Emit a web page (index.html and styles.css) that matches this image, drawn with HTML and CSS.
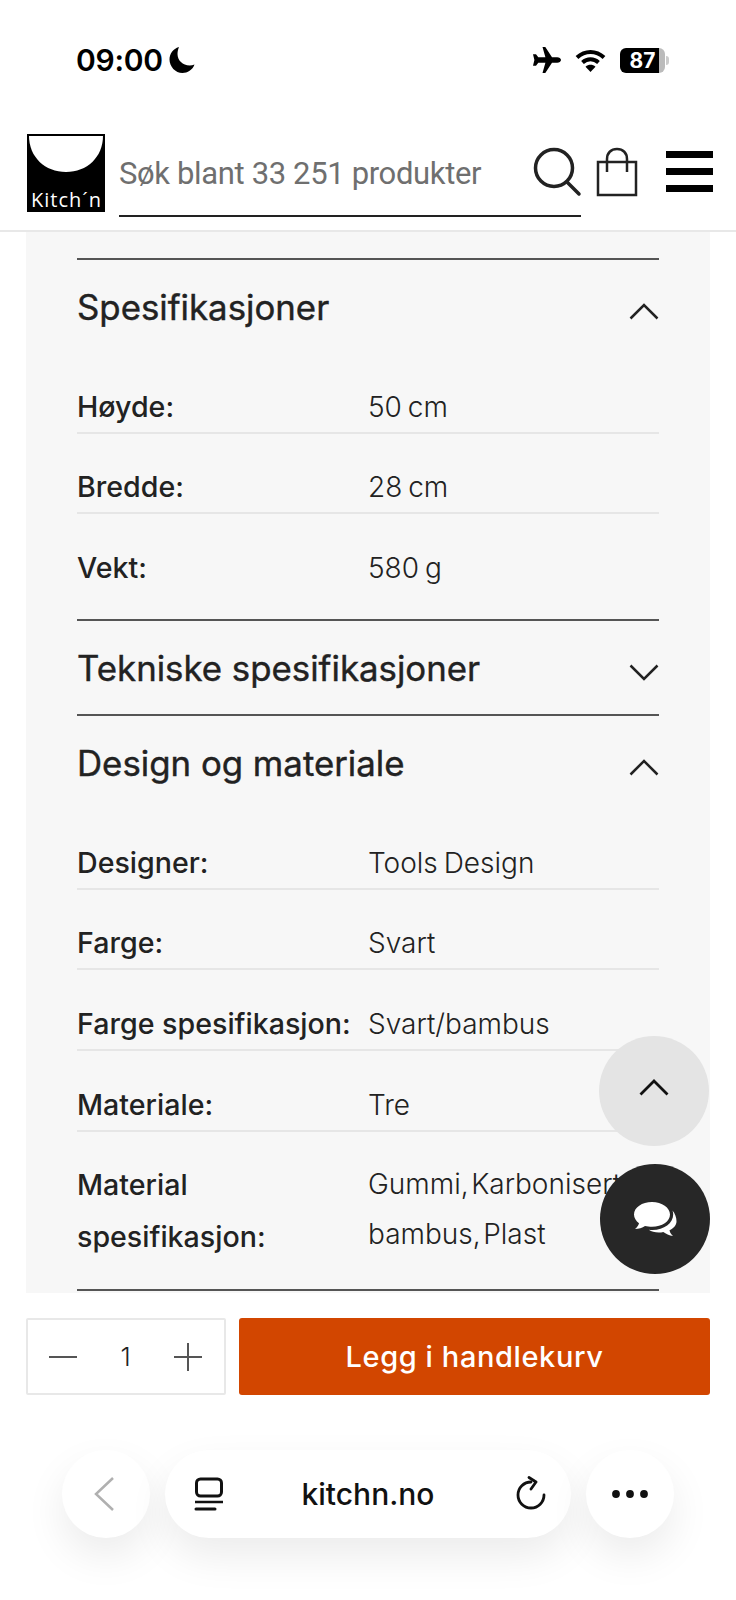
FILE: index.html
```html
<!DOCTYPE html>
<html lang="nb">
<head>
    <meta charset="UTF-8">
    <meta name="viewport" content="width=device-width, initial-scale=1.0">
    <title>Kitch'n</title>
    <link rel="stylesheet" href="styles.css">
</head>
<body>
    <div class="status-bar">
        <div class="status-left">
            <span class="status-time">09:00</span>
            <svg class="status-moon" width="28" height="28" viewBox="0 0 28 28"><path d="M11 1C5 2.800 1.500 8 1.500 13.500 1.500 20.500 7.300 27 14.500 27c5 0 10-3 12-8.500-1.500.7-3 1-4.800 1C14.700 19.500 9.500 14.300 9.500 8c0-2.500.5-4.800 1.500-7z" fill="#000"/></svg>
        </div>
        <div class="status-right">
            <svg width="30" height="26" viewBox="0 0 30 26"><path d="M11.500 0h2.800l6.700 10.300h5.200c2 0 3.800 1.200 3.800 2.700s-1.800 2.700-3.800 2.700H21L14.300 26h-2.800l2.900-10.300H7.300l-2.300 3H2l1.400-5.700L2 7.300h3l2.300 3h7.100z" fill="#000"/></svg>
            <svg width="31" height="23" viewBox="0 0 31 23"><path d="M2 8.500C10 1 21 1 29 8.500" fill="none" stroke="#000" stroke-width="4"/><path d="M7.500 13.500c4.700-4.300 11.300-4.300 16 0" fill="none" stroke="#000" stroke-width="4"/><path d="M15.500 23l-5-5.300c3-2.500 7-2.500 10 0z" fill="#000"/></svg>
            <div class="battery">
                <div class="battery-body">87</div>
                <div class="battery-cap"></div>
            </div>
        </div>
    </div>

    <header class="site-header">
        <svg class="logo" width="78" height="78" viewBox="0 0 78 78">
            <rect width="78" height="78" fill="#000"/>
            <path d="M2 2h74c0 21-16 36-37 36S2 23 2 2z" fill="#fff"/>
            <text x="4" y="73" fill="#fff" font-family="Open Sans, sans-serif" font-size="20" textLength="70">Kitch´n</text>
        </svg>
        <div class="search">
            <span class="search-text">Søk blant 33 251 produkter</span>
            <svg width="50" height="50" viewBox="0 0 50 50"><circle cx="22" cy="21" r="18.500" fill="none" stroke="#222" stroke-width="3.500"/><path d="M35 35l12 12" stroke="#222" stroke-width="3.500" stroke-linecap="round"/></svg>
        </div>
        <svg class="bag" width="42" height="50" viewBox="0 0 42 50"><rect x="2" y="15" width="38" height="33" fill="none" stroke="#222" stroke-width="2.500"/><path d="M11 25V12C11 6 15 2 21 2s10 4 10 10v13" fill="none" stroke="#222" stroke-width="2.500"/></svg>
        <div class="menu">
            <span></span>
            <span></span>
            <span></span>
        </div>
    </header>

    <main class="panel">
        <section class="spec">
            <div class="spec-head">
                <h2>Spesifikasjoner</h2>
                <svg class="chevron" width="30" height="17" viewBox="0 0 30 17"><path d="M1.500 15.500L15 2l13.500 13.500" fill="none" stroke="#222" stroke-width="2.500"/></svg>
            </div>
            <div class="row"><span class="label">Høyde:</span><span class="value">50 cm</span></div>
            <div class="row"><span class="label">Bredde:</span><span class="value">28 cm</span></div>
            <div class="row row-last"><span class="label">Vekt:</span><span class="value">580 g</span></div>
        </section>
        <section class="spec">
            <div class="spec-head">
                <h2>Tekniske spesifikasjoner</h2>
                <svg class="chevron" width="30" height="17" viewBox="0 0 30 17"><path d="M1.500 1.500L15 15 28.500 1.500" fill="none" stroke="#222" stroke-width="2.500"/></svg>
            </div>
        </section>
        <section class="spec">
            <div class="spec-head">
                <h2>Design og materiale</h2>
                <svg class="chevron" width="30" height="17" viewBox="0 0 30 17"><path d="M1.500 15.500L15 2l13.500 13.500" fill="none" stroke="#222" stroke-width="2.500"/></svg>
            </div>
            <div class="row"><span class="label">Designer:</span><span class="value">Tools Design</span></div>
            <div class="row"><span class="label">Farge:</span><span class="value">Svart</span></div>
            <div class="row"><span class="label">Farge spesifikasjon:</span><span class="value">Svart/bambus</span></div>
            <div class="row"><span class="label">Materiale:</span><span class="value">Tre</span></div>
            <div class="row row-last row-tall"><span class="label">Material spesifikasjon:</span><span class="value">Gummi,&#8202;Karbonisert bambus,&#8202;Plast</span></div>
        </section>
        <section class="spec"></section>
    </main>

    <div class="buy-bar">
        <div class="qty">
            <svg width="30" height="30" viewBox="0 0 30 30"><path d="M1 15h28" stroke="#555" stroke-width="2"/></svg>
            <span class="qty-num">1</span>
            <svg width="30" height="30" viewBox="0 0 30 30"><path d="M1 15h28M15 1v28" stroke="#555" stroke-width="2"/></svg>
        </div>
        <button class="buy-btn" type="button">Legg i handlekurv</button>
    </div>

    <nav class="browser-bar">
        <div class="pill pill-round">
            <svg class="back-icon" width="22" height="36" viewBox="0 0 22 36"><path d="M20 2L3 18l17 16" fill="none" stroke="#b0b0b0" stroke-width="2.500"/></svg>
        </div>
        <div class="pill pill-url">
            <svg width="30" height="34" viewBox="0 0 30 34"><rect x="2.500" y="2" width="25" height="17" rx="4" fill="none" stroke="#111" stroke-width="3"/><path d="M1 25h28" stroke="#111" stroke-width="2.500"/><path d="M2 32h19" stroke="#111" stroke-width="3" stroke-linecap="round"/></svg>
            <span class="url-text">kitchn.no</span>
            <svg width="30" height="36" viewBox="0 0 30 36"><path d="M15 6A13 13 0 1 0 28 19" fill="none" stroke="#111" stroke-width="2.800" stroke-linecap="round"/><path d="M13 1.500L20 6l-5 7" fill="none" stroke="#111" stroke-width="2.800" stroke-linecap="round" stroke-linejoin="round"/></svg>
        </div>
        <div class="pill pill-round">
            <svg width="38" height="10" viewBox="0 0 38 10"><circle cx="5" cy="5" r="3.900" fill="#111"/><circle cx="19" cy="5" r="3.900" fill="#111"/><circle cx="33" cy="5" r="3.900" fill="#111"/></svg>
        </div>
    </nav>

    <!-- flytende knapper over innholdet -->
    <div class="float float-up">
        <svg width="30" height="17" viewBox="0 0 30 17"><path d="M1.500 15.500L15 2l13.500 13.500" fill="none" stroke="#111" stroke-width="2.800"/></svg>
    </div>
    <div class="float float-chat">
        <svg width="44" height="36" viewBox="0 0 44 36"><path d="M19 1C9 1 1 6.500 1 13.500c0 3.500 2 6.500 5 8.800C5.500 24.500 3.500 27 2 28c3.500 0 7.500-1 10-3 2 .5 4.500.8 7 .8 10 0 18-5.500 18-12.300S29 1 19 1z" fill="#fff"/><path d="M39.500 9.500c.5 1.300.7 2.600.7 4C40.200 22 31 29 19.500 29c-1.300 0-2.500-.1-3.700-.3 2.500 1.800 6 2.800 10 2.800 1.700 0 3-.1 4.500-.5 2.500 1.800 6 3.500 9.700 4-1.200-1-3-3-3.500-5.700 4.300-2 7-5.200 7-9 0-4.200-1.600-7.800-4-10.800z" fill="#fff"/></svg>
    </div>
</body>
</html>
```

FILE: styles.css
```css
* {
    box-sizing: border-box;
}
html, body {
    margin: 0;
    padding: 0;
}
body {
    position: relative;
    width: 736px;
    height: 1600px;
    overflow: hidden;
    background-color: #fff;
    color: #222;
    font-family: 'Inter', sans-serif;
}

/* status bar */
.status-bar {
    display: flex;
    justify-content: space-between;
    align-items: center;
    height: 120px;
    padding: 0 67px 0 76px;
}
.status-left {
    display: flex;
    align-items: center;
    gap: 5px;
}
.status-time {
    font-size: 30px;
    font-weight: 600;
    color: #000;
    letter-spacing: -0.3px;
}
.status-right {
    display: flex;
    align-items: center;
    gap: 14px;
}
.battery {
    display: flex;
    align-items: center;
    gap: 1px;
}
.battery-body {
    width: 45px;
    height: 25px;
    border-radius: 6px;
    background: linear-gradient(to right, #000 87%, #bbb 87%);
    color: #fff;
    font-size: 21px;
    font-weight: 700;
    line-height: 25px;
    text-align: center;
}
.battery-cap {
    width: 3px;
    height: 9px;
    border-radius: 0 3px 3px 0;
    background-color: #ccc;
}

/* header */
.site-header {
    display: flex;
    align-items: flex-start;
    height: 112px;
    padding: 14px 23px 0 27px;
    border-bottom: 2px solid #e8e8e8;
}
.search {
    display: flex;
    justify-content: space-between;
    align-items: flex-start;
    width: 462px;
    height: 83px;
    margin-left: 14px;
    padding-top: 13px;
    border-bottom: 2px solid #222;
}
.search svg {
    margin-right: -1px;
}
.search-text {
    padding-top: 9px;
    font-family: 'Roboto', sans-serif;
    font-size: 31px;
    letter-spacing: -0.35px;
    line-height: 36px;
    color: #6f6f6f;
}
.bag {
    margin: 13px 0 0 15px;
}
.menu {
    display: flex;
    flex-direction: column;
    gap: 10px;
    width: 47px;
    margin: 17px 0 0 28px;
}
.menu span {
    height: 7px;
    background-color: #000;
}

/* panel */
.panel {
    height: 1061px;
    margin: 0 26px;
    padding: 26px 51px 0;
    overflow: hidden;
    background-color: #f7f7f7;
}
.spec {
    border-top: 2px solid #555;
}
.spec-head {
    display: flex;
    justify-content: space-between;
    align-items: center;
    height: 93px;
}
.spec-head h2 {
    margin: 0;
    padding-top: 1px;
    font-size: 34.8px;
    font-weight: 400;
    -webkit-text-stroke: 0.4px #222;
    color: #222;
}
.chevron {
    margin-top: 9px;
}
.row {
    display: grid;
    grid-template-columns: 291px 291px;
    padding-top: 28.7px;
    border-bottom: 2px solid #e6e6e6;
    font-size: 28px;
    line-height: 50px;
}
.row-last {
    padding-bottom: 26px;
    border-bottom: 0;
}
.row-tall {
    padding-top: 27px;
    padding-bottom: 26px;
}
.row-tall .label {
    line-height: 52px;
}
.label {
    font-size: 28.6px;
    font-weight: 500;
}
.value {
    font-weight: 300;
    word-spacing: -2px;
}

/* kjop */
.buy-bar {
    display: flex;
    gap: 13px;
    height: 77px;
    margin: 25px 26px 0;
}
.qty {
    display: flex;
    justify-content: space-between;
    align-items: center;
    width: 200px;
    padding: 0 21px 0 20px;
    border: 2px solid #e8e8e8;
    border-radius: 2px;
    background-color: #fff;
}
.qty-num {
    font-size: 26px;
    font-weight: 300;
}
.buy-btn {
    flex: 1;
    border: none;
    border-radius: 3px;
    background-color: #d24600;
    color: #fff;
    font-family: inherit;
    font-size: 29px;
    font-weight: 500;
    letter-spacing: 0.6px;
}

/* nettleser */
.browser-bar {
    display: flex;
    gap: 15px;
    height: 88px;
    margin: 55px 62px 0;
}
.pill {
    display: flex;
    align-items: center;
    justify-content: center;
    border-radius: 44px;
    background-color: #fff;
    box-shadow: 0 18px 40px rgba(0, 0, 0, 0.08);
}
.pill-round {
    width: 88px;
}
.pill-url {
    flex: 1;
    justify-content: space-between;
    padding: 0 25px 0 29px;
}
.back-icon {
    margin-right: 5px;
}
.url-text {
    margin-right: 4px;
    font-size: 30px;
    font-weight: 500;
    color: #111;
}

/* flytende knapper */
.float {
    position: absolute;
    display: flex;
    align-items: center;
    justify-content: center;
    width: 110px;
    height: 110px;
    border-radius: 50%;
}
.float-up {
    top: 1036px;
    left: 599px;
    background-color: #e4e4e4;
    padding-bottom: 8px;
}
.float-chat {
    top: 1164px;
    left: 600px;
    background-color: #272727;
}
```
